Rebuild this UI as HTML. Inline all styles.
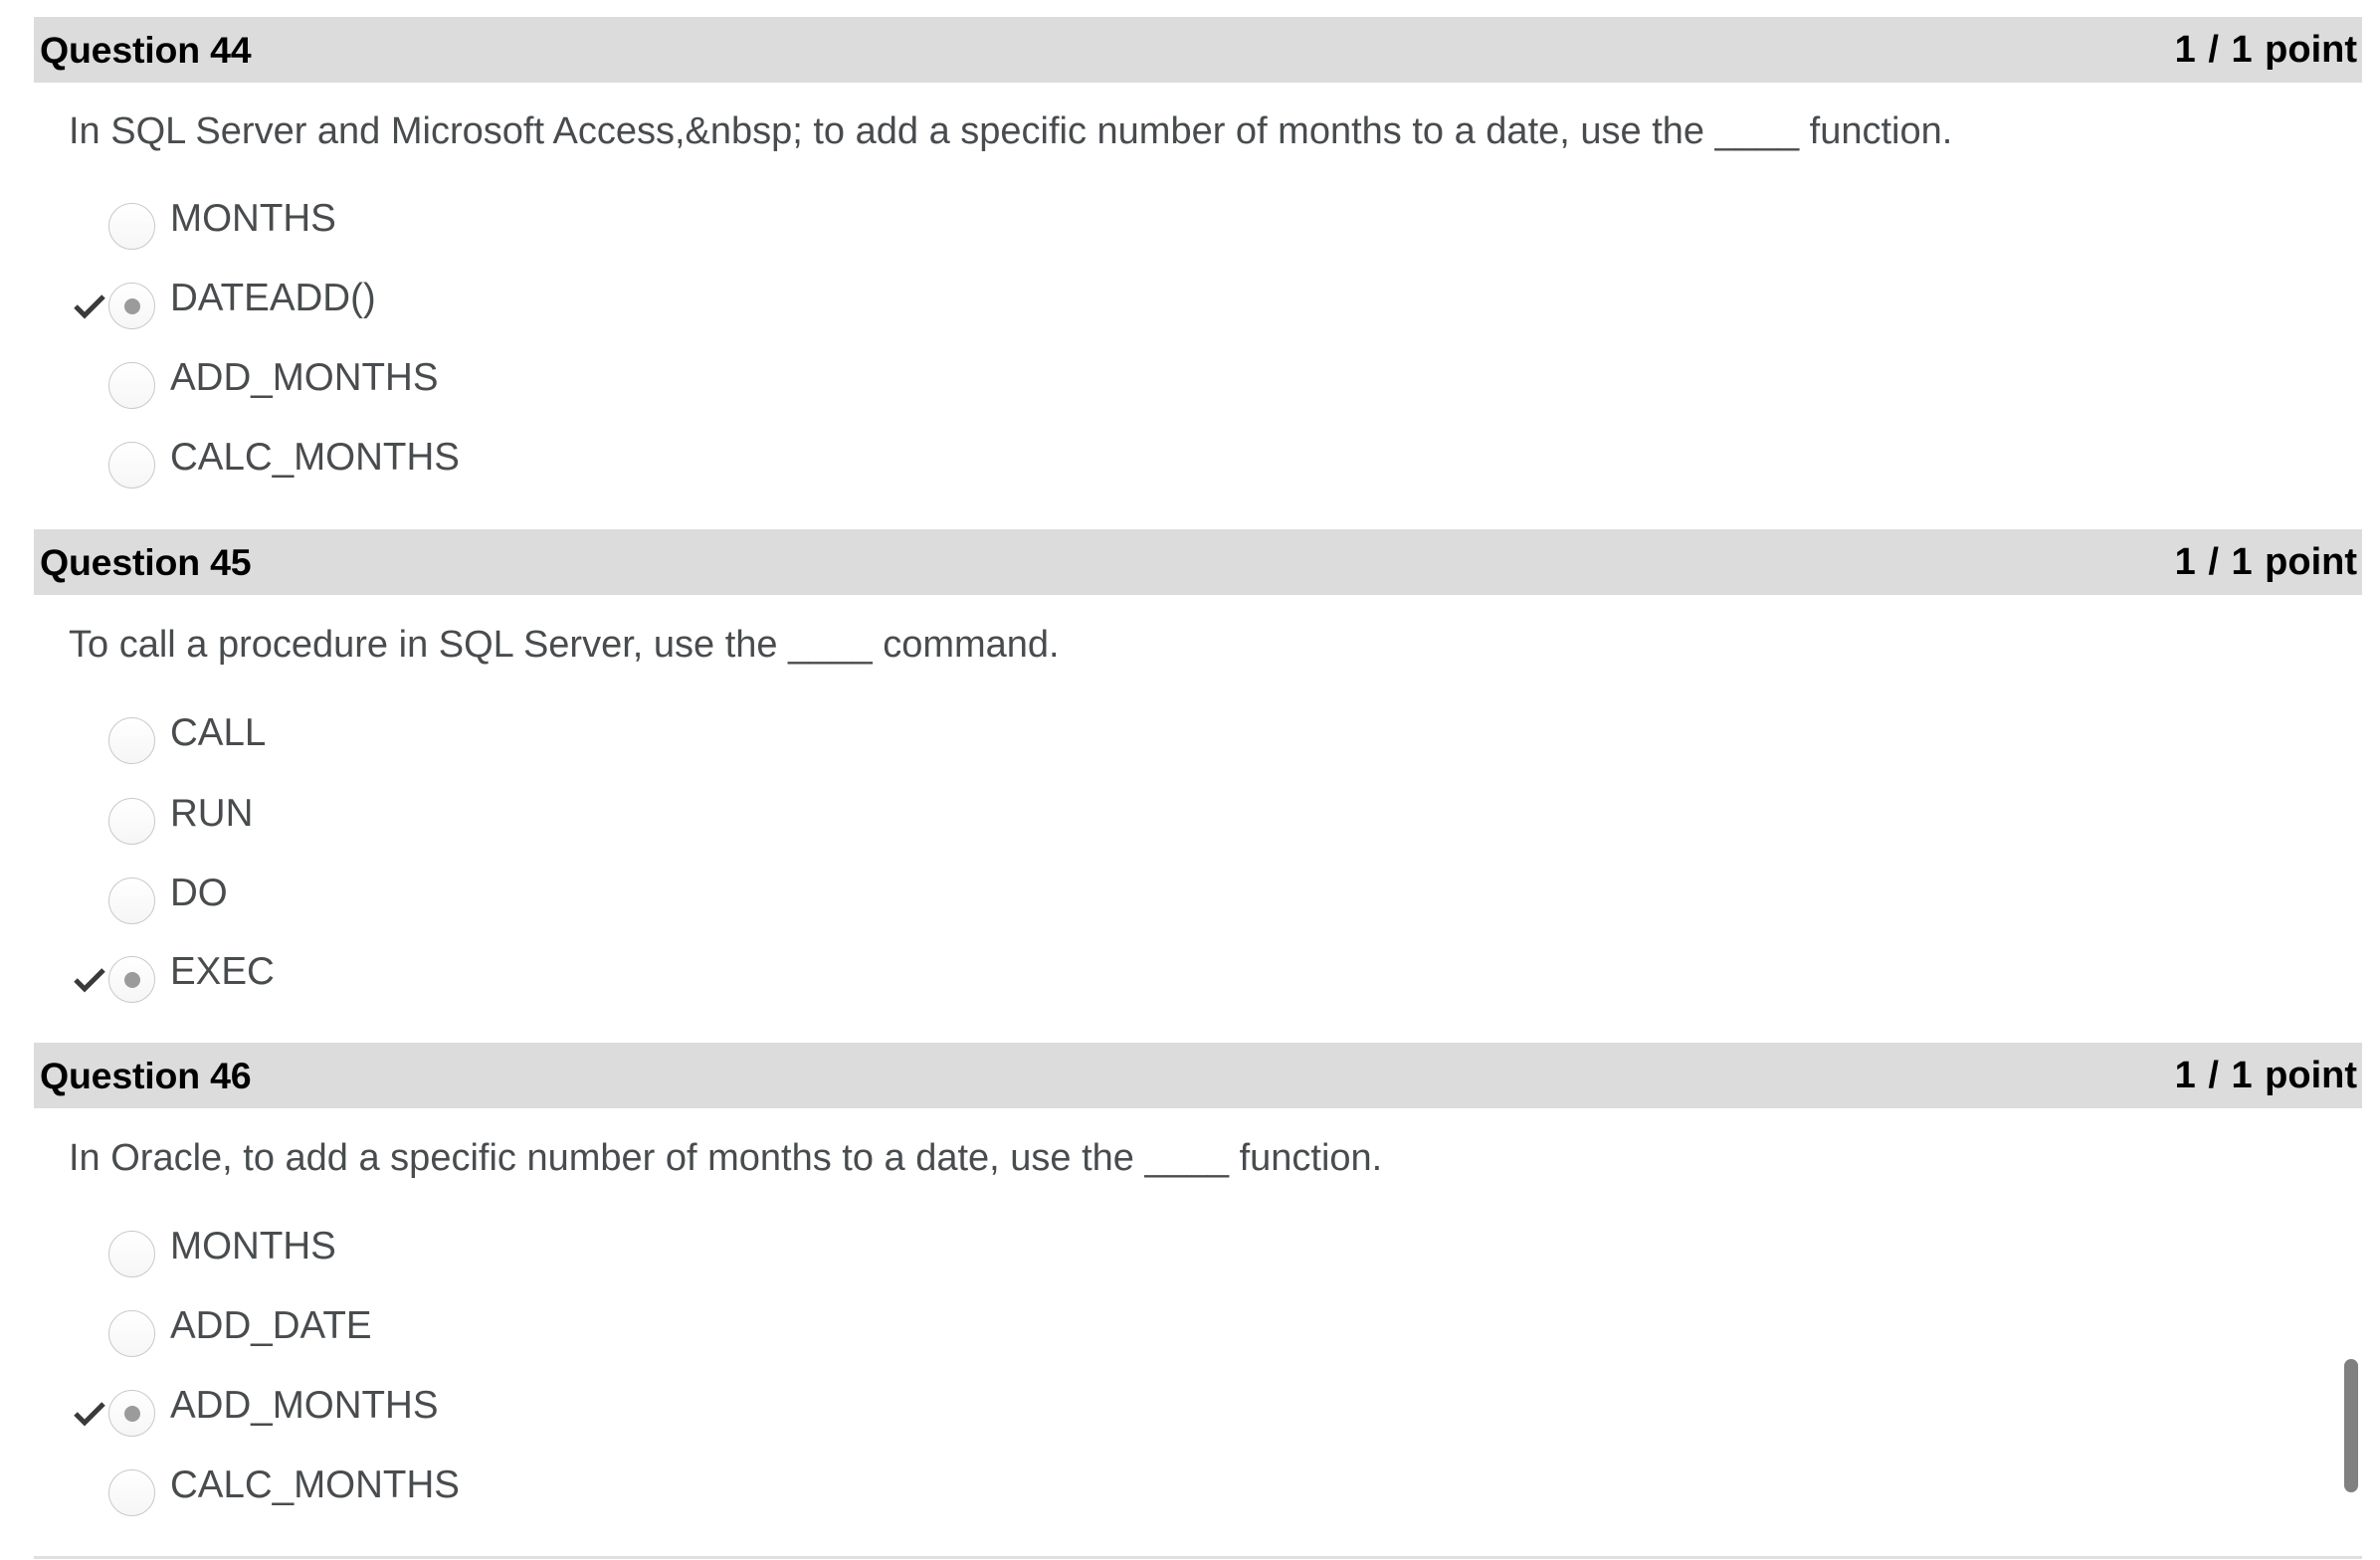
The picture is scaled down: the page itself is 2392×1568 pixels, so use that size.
<!DOCTYPE html>
<html><head><meta charset="utf-8"><style>
html,body{margin:0;padding:0;background:#fff;}
body{width:2392px;height:1568px;position:relative;overflow:hidden;font-family:"Liberation Sans",sans-serif;}
.bar{position:absolute;left:34px;width:2340px;height:66px;background:#dcdcdc;}
.bar .t{position:absolute;left:6px;top:0;line-height:66px;font-size:37.5px;font-weight:bold;color:#000;letter-spacing:-0.2px;}
.bar .p{position:absolute;right:5px;top:0;line-height:66px;font-size:38px;font-weight:bold;color:#000;letter-spacing:0px;word-spacing:2px;}
.q{position:absolute;left:69px;font-size:38px;color:#494c4e;line-height:40px;white-space:nowrap;}
.opt{position:absolute;left:0;height:0;}
.r{position:absolute;left:109px;width:47px;height:47px;margin-top:-23px;border:1.5px solid #c9c9c9;border-radius:50%;background:linear-gradient(#fff,#f6f6f6);box-sizing:border-box;}
.r.s::after{content:"";position:absolute;left:14.5px;top:14.5px;width:16px;height:16px;border-radius:50%;background:#9b9b9b;}
.l{position:absolute;left:171px;top:-27px;font-size:38.5px;line-height:40px;color:#494c4e;white-space:nowrap;}
.ck{position:absolute;left:73px;top:-12px;}
.sb{position:absolute;left:2356px;top:1366px;width:14px;height:134px;border-radius:7px;background:#808080;}
.hr{position:absolute;left:34px;top:1564px;width:2340px;height:3px;background:#e0e0e0;}
</style></head><body>

<div class="bar" style="top:17px"><span class="t">Question 44</span><span class="p">1 / 1 point</span></div>
<div class="q" style="top:112px">In SQL Server and Microsoft Access,&amp;nbsp; to add a specific number of months to a date, use the ____ function.</div>
<div class="opt" style="top:227px"><div class="r"></div><div class="l">MONTHS</div></div>
<div class="opt" style="top:307px"><svg class="ck" width="34" height="26" viewBox="0 0 34 26"><path d="M3 13 L12 22 L31 3" fill="none" stroke="#3a3a3a" stroke-width="5"/></svg><div class="r s"></div><div class="l">DATEADD()</div></div>
<div class="opt" style="top:387px"><div class="r"></div><div class="l">ADD_MONTHS</div></div>
<div class="opt" style="top:467px"><div class="r"></div><div class="l">CALC_MONTHS</div></div>

<div class="bar" style="top:532px"><span class="t">Question 45</span><span class="p">1 / 1 point</span></div>
<div class="q" style="top:628px">To call a procedure in SQL Server, use the ____ command.</div>
<div class="opt" style="top:744px"><div class="r"></div><div class="l">CALL</div></div>
<div class="opt" style="top:825px"><div class="r"></div><div class="l">RUN</div></div>
<div class="opt" style="top:905px"><div class="r"></div><div class="l">DO</div></div>
<div class="opt" style="top:984px"><svg class="ck" width="34" height="26" viewBox="0 0 34 26"><path d="M3 13 L12 22 L31 3" fill="none" stroke="#3a3a3a" stroke-width="5"/></svg><div class="r s"></div><div class="l">EXEC</div></div>

<div class="bar" style="top:1048px"><span class="t">Question 46</span><span class="p">1 / 1 point</span></div>
<div class="q" style="top:1144px">In Oracle, to add a specific number of months to a date, use the ____ function.</div>
<div class="opt" style="top:1260px"><div class="r"></div><div class="l">MONTHS</div></div>
<div class="opt" style="top:1340px"><div class="r"></div><div class="l">ADD_DATE</div></div>
<div class="opt" style="top:1420px"><svg class="ck" width="34" height="26" viewBox="0 0 34 26"><path d="M3 13 L12 22 L31 3" fill="none" stroke="#3a3a3a" stroke-width="5"/></svg><div class="r s"></div><div class="l">ADD_MONTHS</div></div>
<div class="opt" style="top:1500px"><div class="r"></div><div class="l">CALC_MONTHS</div></div>

<div class="sb"></div>
<div class="hr"></div>
</body></html>
